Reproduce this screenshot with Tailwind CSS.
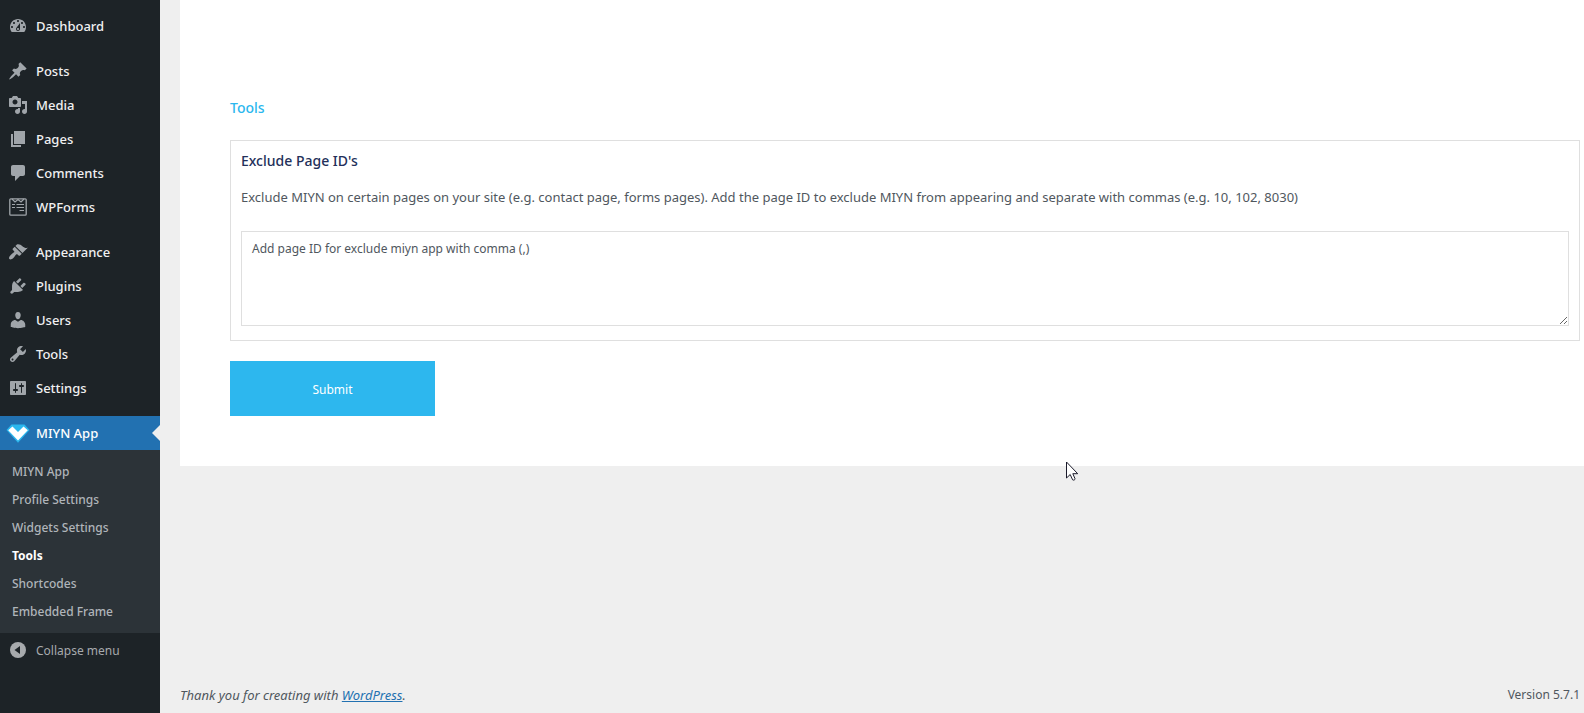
<!DOCTYPE html>
<html lang="en">
<head>
  <meta charset="UTF-8" />
  <title>Tools – MIYN App</title>
  <meta name="viewport" content="width=device-width, initial-scale=1.0">
  <script src="https://cdn.jsdelivr.net/npm/@tailwindcss/browser@4"></script>
</head>
<body class="flex min-h-screen bg-[#efefef] font-['Segoe_UI','Noto_Sans',sans-serif] text-[13px] text-[#50575e]">

  <!-- Admin menu -->
  <nav class="w-40 shrink-0 bg-[#1d2327] text-[13px] font-medium text-[#f0f0f1]">
    <ul class="pt-[9px]">
      <li class="mb-[11px]">
        <a href="#" class="flex h-[34px] items-center gap-2 pl-2">
          <svg class="size-5 shrink-0 fill-[#a0a5aa]" viewBox="0 0 20 20"><path d="M3.76 16h12.48c1.1-1.37 1.76-3.11 1.76-5 0-4.42-3.58-8-8-8s-8 3.58-8 8c0 1.89.66 3.63 1.76 5zM10 4c.55 0 1 .45 1 1s-.45 1-1 1-1-.45-1-1 .45-1 1-1zM6 6c.55 0 1 .45 1 1s-.45 1-1 1-1-.45-1-1 .45-1 1-1zm8 0c.55 0 1 .45 1 1s-.45 1-1 1-1-.45-1-1 .45-1 1-1zm-5.37 5.55L12 7v6c0 1.1-.9 2-2 2s-2-.9-2-2c0-.57.24-1.08.63-1.45zM4 10c.55 0 1 .45 1 1s-.45 1-1 1-1-.45-1-1 .45-1 1-1zm12 0c.55 0 1 .45 1 1s-.45 1-1 1-1-.45-1-1 .45-1 1-1zm-5 3c0-.55-.45-1-1-1s-1 .45-1 1 .45 1 1 1 1-.45 1-1z"/></svg>
          <span class="pt-0.5">Dashboard</span>
        </a>
      </li>
      <li>
        <a href="#" class="flex h-[34px] items-center gap-2 pl-2">
          <svg class="size-5 shrink-0 fill-[#a0a5aa]" viewBox="0 0 20 20"><path d="M10.44 3.02l1.82-1.82 6.36 6.35-1.83 1.82c-1.05-.68-2.48-.57-3.41.36l-.75.75c-.92.93-1.04 2.35-.35 3.41l-1.83 1.82-2.41-2.41-2.8 2.79c-.42.42-3.38 2.71-3.8 2.29s1.86-3.39 2.28-3.81l2.79-2.79L4.1 9.36l1.83-1.82c1.05.69 2.48.57 3.4-.36l.75-.75c.93-.92 1.05-2.35.36-3.41z"/></svg>
          <span class="pt-0.5">Posts</span>
        </a>
      </li>
      <li>
        <a href="#" class="flex h-[34px] items-center gap-2 pl-2">
          <svg class="size-5 shrink-0 fill-[#a0a5aa]" viewBox="0 0 20 20"><path d="M13 11V4c0-.55-.45-1-1-1h-1.67L9 1H5L3.67 3H2c-.55 0-1 .45-1 1v7c0 .55.45 1 1 1h10c.55 0 1-.45 1-1zM7 4.5c1.38 0 2.5 1.12 2.5 2.5S8.38 9.5 7 9.5 4.5 8.38 4.5 7 5.62 4.5 7 4.5zM14 6h5v10.5c0 1.38-1.12 2.5-2.5 2.5S14 17.88 14 16.5s1.12-2.5 2.5-2.5c.17 0 .34.02.5.05V9h-3V6zm-4 8.05V13h2v3.5c0 1.38-1.12 2.5-2.5 2.5S7 17.88 7 16.5 8.12 14 9.5 14c.17 0 .34.02.5.05z"/></svg>
          <span class="pt-0.5">Media</span>
        </a>
      </li>
      <li>
        <a href="#" class="flex h-[34px] items-center gap-2 pl-2">
          <svg class="size-5 shrink-0 fill-[#a0a5aa]" viewBox="0 0 20 20"><path d="M6 15V2h11v13H6zm-1 1h8v2H3V5h2v11z"/></svg>
          <span class="pt-0.5">Pages</span>
        </a>
      </li>
      <li>
        <a href="#" class="flex h-[34px] items-center gap-2 pl-2">
          <svg class="size-5 shrink-0 fill-[#a0a5aa]" viewBox="0 0 20 20"><path d="M5 2h10c1.1 0 2 .9 2 2v7c0 1.1-.9 2-2 2h-3l-5 5v-5H5c-1.1 0-2-.9-2-2V4c0-1.1.9-2 2-2z"/></svg>
          <span class="pt-0.5">Comments</span>
        </a>
      </li>
      <li class="mb-[11px]">
        <a href="#" class="flex h-[34px] items-center gap-2 pl-2">
          <svg class="size-5 shrink-0 fill-none stroke-[#a0a5aa]" viewBox="0 0 20 20"><rect x="1.8" y="1.8" width="16.4" height="16.4" rx="1" stroke-width="1.300"/><path d="M4 2l3 3 3-2.500L13 5l3-3M4 7.500h3M8.500 7.500H16M4 10.500h3M8.500 10.500H16M11.500 13.500H16" stroke-width="1.200"/></svg>
          <span class="pt-0.5">WPForms</span>
        </a>
      </li>
      <li>
        <a href="#" class="flex h-[34px] items-center gap-2 pl-2">
          <svg class="size-5 shrink-0 fill-[#a0a5aa]" viewBox="0 0 20 20"><path d="M14.48 11.06L7.41 3.99l1.5-1.5c.5-.56 2.3-.47 3.51.32 1.21.8 1.43 1.28 2.91 2.1 1.18.64 2.45 1.26 4.45.85zm-.71.71L6.7 4.7 4.93 6.47c-.39.39-.39 1.02 0 1.41l1.06 1.06c.39.39.39 1.03 0 1.42-.6.6-1.43 1.11-2.21 1.69-.35.26-.7.53-1.01.84C1.43 14.23.4 16.08 1.4 17.07c.99 1 2.84-.03 4.18-1.36.31-.31.58-.66.85-1.02.57-.78 1.08-1.61 1.69-2.21.39-.39 1.02-.39 1.41 0l1.06 1.06c.39.39 1.02.39 1.41 0z"/></svg>
          <span class="pt-0.5">Appearance</span>
        </a>
      </li>
      <li>
        <a href="#" class="flex h-[34px] items-center gap-2 pl-2">
          <svg class="size-5 shrink-0 fill-[#a0a5aa]" viewBox="0 0 20 20"><path d="M13.11 4.36L9.87 7.6 8 5.73l3.24-3.24c.35-.34 1.05-.2 1.56.32.52.51.66 1.21.31 1.55zm-8 1.77l.91-1.12 9.01 9.01-1.19.84c-.71.71-2.63 1.16-3.82 1.16H6.14L4.9 17.26c-.59.59-1.54.59-2.12 0-.59-.58-.59-1.53 0-2.12l1.24-1.24v-3.88c0-1.13.4-3.19 1.09-3.89zm7.26 3.97l3.24-3.24c.34-.35 1.04-.21 1.55.31.52.51.66 1.21.31 1.55l-3.24 3.25z"/></svg>
          <span class="pt-0.5">Plugins</span>
        </a>
      </li>
      <li>
        <a href="#" class="flex h-[34px] items-center gap-2 pl-2">
          <svg class="size-5 shrink-0 fill-[#a0a5aa]" viewBox="0 0 20 20"><path d="M10 9.25c-2.27 0-2.73-3.44-2.73-3.44C7 4.02 7.82 2 9.97 2c2.16 0 2.98 2.02 2.71 3.81 0 0-.41 3.44-2.68 3.44zm0 2.57L12.720 10c2.39 0 4.52 2.33 4.52 4.53v2.49s-3.65 1.13-7.24 1.13c-3.65 0-7.24-1.13-7.24-1.13v-2.49c0-2.25 1.94-4.48 4.47-4.48z"/></svg>
          <span class="pt-0.5">Users</span>
        </a>
      </li>
      <li>
        <a href="#" class="flex h-[34px] items-center gap-2 pl-2">
          <svg class="size-5 shrink-0 fill-[#a0a5aa]" viewBox="0 0 20 20"><path d="M16.68 9.77c-1.34 1.34-3.3 1.67-4.95.99l-5.41 6.52c-.99.99-2.59.99-3.58 0s-.99-2.59 0-3.57l6.52-5.42c-.68-1.65-.35-3.61.99-4.95 1.28-1.28 3.12-1.62 4.72-1.06l-2.89 2.89 2.82 2.82 2.86-2.87c.53 1.58.18 3.39-1.08 4.65zM3.81 16.21c.4.39 1.04.39 1.43 0 .4-.4.4-1.04 0-1.43-.39-.4-1.03-.4-1.43 0-.39.39-.39 1.03 0 1.43z"/></svg>
          <span class="pt-0.5">Tools</span>
        </a>
      </li>
      <li class="mb-[11px]">
        <a href="#" class="flex h-[34px] items-center gap-2 pl-2">
          <svg class="size-5 shrink-0 fill-[#a0a5aa]" viewBox="0 0 20 20"><path d="M18 16V4c0-.55-.45-1-1-1H3c-.55 0-1 .45-1 1v12c0 .55.45 1 1 1h14c.55 0 1-.45 1-1zM8 11h1c.55 0 1 .45 1 1s-.45 1-1 1H8v1.500c0 .28-.22.500-.5.500s-.5-.22-.5-.5V13H6c-.55 0-1-.45-1-1s.45-1 1-1h1V5.500c0-.28.22-.5.500-.5s.5.220.5.500V11zm5-2h-1c-.55 0-1-.45-1-1s.45-1 1-1h1V5.500c0-.28.22-.5.500-.5s.5.220.5.500V7h1c.55 0 1 .45 1 1s-.45 1-1 1h-1v5.500c0 .28-.22.500-.5.500s-.5-.22-.5-.5V9z"/></svg>
          <span class="pt-0.5">Settings</span>
        </a>
      </li>

      <!-- Current plugin, opened -->
      <li>
        <a href="#" class="relative flex h-[34px] items-center gap-1.5 bg-[#2271b1] pl-1.5 text-white">
          <svg class="h-5 w-6 shrink-0" viewBox="0 0 24 20">
            <path d="M5.500 1.500h13L23.500 7 12 19.800.5 7z" fill="#2bb7ee"/>
            <path d="M6.500 3.500L12 9l5.500-5.500 4.300 3.700L12 17.600 2.200 7.200z" fill="#fff"/>
          </svg>
          <span class="pt-0.5">MIYN App</span>
          <span class="absolute top-1/2 right-0 -translate-y-1/2 border-8 border-l-0 border-transparent border-r-[#efefef]"></span>
        </a>
        <ul class="bg-[#2c3338] pt-[7px] pb-2 text-[12px] text-[#b0b5ba]">
          <li><a href="#" class="flex h-7 items-center pt-0.5 pl-3">MIYN App</a></li>
          <li><a href="#" class="flex h-7 items-center pt-0.5 pl-3">Profile Settings</a></li>
          <li><a href="#" class="flex h-7 items-center pt-0.5 pl-3">Widgets Settings</a></li>
          <li><a href="#" class="flex h-7 items-center pt-0.5 pl-3 font-bold text-white">Tools</a></li>
          <li><a href="#" class="flex h-7 items-center pt-0.5 pl-3">Shortcodes</a></li>
          <li><a href="#" class="flex h-7 items-center pt-0.5 pl-3">Embedded Frame</a></li>
        </ul>
      </li>
      <li>
        <button type="button" class="flex h-[34px] items-center gap-2 pl-2 text-[12px] font-normal text-[#a7aaad]">
          <svg class="size-5 shrink-0" viewBox="0 0 20 20"><circle cx="10" cy="10" r="8" fill="#a7aaad"/><path d="M12 6v8l-5.500-4z" fill="#1d2327"/></svg>
          <span class="pt-0.5">Collapse menu</span>
        </button>
      </li>
    </ul>
  </nav>

  <div class="flex min-w-0 grow flex-col pl-5">
    <main class="bg-white pt-24 pr-1 pb-[50px] pl-[50px]">
      <h2 class="text-[14px] leading-6 font-medium text-[#2bb7ee]">Tools</h2>
      <form class="mt-5">
        <section class="border border-[#dfdfdf] px-2.5 pt-2.5 pb-3.5">
          <label for="exclude-ids" class="block text-[14px] leading-5 font-medium text-[#23305a]">Exclude Page ID's</label>
          <p class="mt-4 text-[13px] leading-5">Exclude MIYN on certain pages on your site (e.g. contact page, forms pages). Add the page ID to exclude MIYN from appearing and separate with commas (e.g. 10, 102, 8030)</p>
          <textarea id="exclude-ids" placeholder="Add page ID for exclude miyn app with comma (,)" class="mt-6 block h-[95px] w-full border border-[#dfdfdf] px-2.5 py-[7px] text-[12px] leading-5 outline-none placeholder:text-[#50575e]"></textarea>
        </section>
        <button type="submit" class="mt-5 block h-[55px] w-[205px] bg-[#2db7ee] pt-0.5 text-[12px] text-white">Submit</button>
      </form>
    </main>

    <footer class="mt-auto flex justify-between pr-1 pb-2 leading-5">
      <p class="italic">Thank you for creating with <a href="#" class="text-[#2271b1] underline">WordPress</a>.</p>
      <p class="text-[12px] leading-5">Version 5.7.1</p>
    </footer>
  </div>

  <!-- Mouse pointer -->
  <svg class="pointer-events-none absolute top-[461px] left-[1066px] h-5 w-3" viewBox="0 0 12 20"><path d="M.5 1v16l3.700-3.500 2.400 5.300c1 .8 2.600 0 2.400-1.100l-2.200-5h4.900z" fill="#fff" stroke="#1a1a2a"/></svg>

</body>
</html>
